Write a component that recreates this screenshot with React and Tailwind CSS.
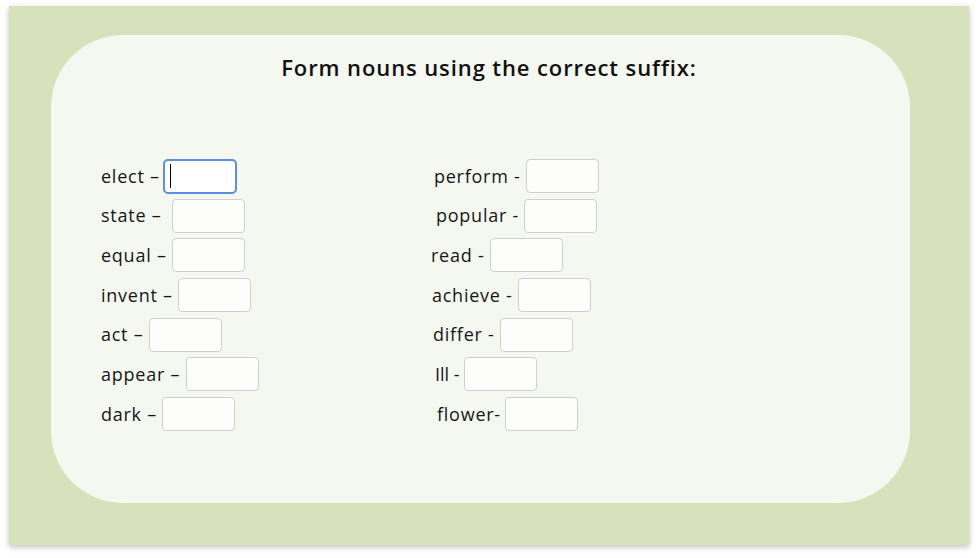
import React from 'react';

const leftRows = [
  { label: 'elect – ', focused: true },
  { label: 'state –  ' },
  { label: 'equal – ' },
  { label: 'invent – ' },
  { label: 'act – ' },
  { label: 'appear – ' },
  { label: 'dark – ' },
];

const rightRows = [
  { label: 'perform - ', pad: 'pl-[3px]' },
  { label: 'popular - ', pad: 'pl-[5px]' },
  { label: 'read - ', pad: 'pl-0' },
  { label: 'achieve - ', pad: 'pl-[1px]' },
  { label: 'differ - ', pad: 'pl-[2px]' },
  { label: 'Ill - ', pad: 'pl-[4px]', tight: true },
  { label: 'flower-', pad: 'pl-[6px]', extra: true },
];

const Row = ({ label, focused, pad = '', tight, extra }) => (
  <div className={`flex items-center h-[34px] ${pad}`}>
    <span className={`whitespace-pre ${tight ? 'tracking-[0px]' : ''}`}>{label}</span>
    {focused ? (
      <div className="relative -ml-[2px]">
        <input className="block w-[74px] h-[35px] rounded-[5px] border-2 border-[#5b8fe0] bg-white px-2 outline-none" />
        {/* caret */}
        <span className="absolute left-[7px] top-[5px] w-[1px] h-[24px] bg-black" />
      </div>
    ) : (
      <input
        className={`w-[73px] h-[34px] rounded-[4px] border border-[#cfcfcf] bg-[#fdfdfc] px-2 outline-none ${extra ? 'ml-[4px]' : ''}`}
      />
    )}
  </div>
);

export default function App() {
  return (
    <div className="w-[977px] h-[558px] bg-white pt-[6px] pl-[9px]" style={{ fontFamily: '"Open Sans", sans-serif' }}>
      <div className="w-[960px] h-[539px] bg-[#d7e2bd] shadow-[0_2px_6px_rgba(0,0,0,0.25)] pt-[29px] pl-[42px]">
        <div className="w-[859px] h-[468px] rounded-[72px] bg-[#f5f8f0] pt-[16px]">
          <h1 className="text-center text-[22px] leading-[32px] font-semibold tracking-[0.9px] text-[#111] pl-[17px]">
            Form nouns using the correct suffix:
          </h1>
          <div className="flex mt-[76px] text-[18px] tracking-[0.75px] text-[#161616]">
            <div className="flex flex-col gap-[5.7px] pl-[50px] w-[380px]">
              {leftRows.map((r) => (
                <Row key={r.label} {...r} />
              ))}
            </div>
            <div className="flex flex-col gap-[5.7px]">
              {rightRows.map((r) => (
                <Row key={r.label} {...r} />
              ))}
            </div>
          </div>
        </div>
      </div>
    </div>
  );
}
